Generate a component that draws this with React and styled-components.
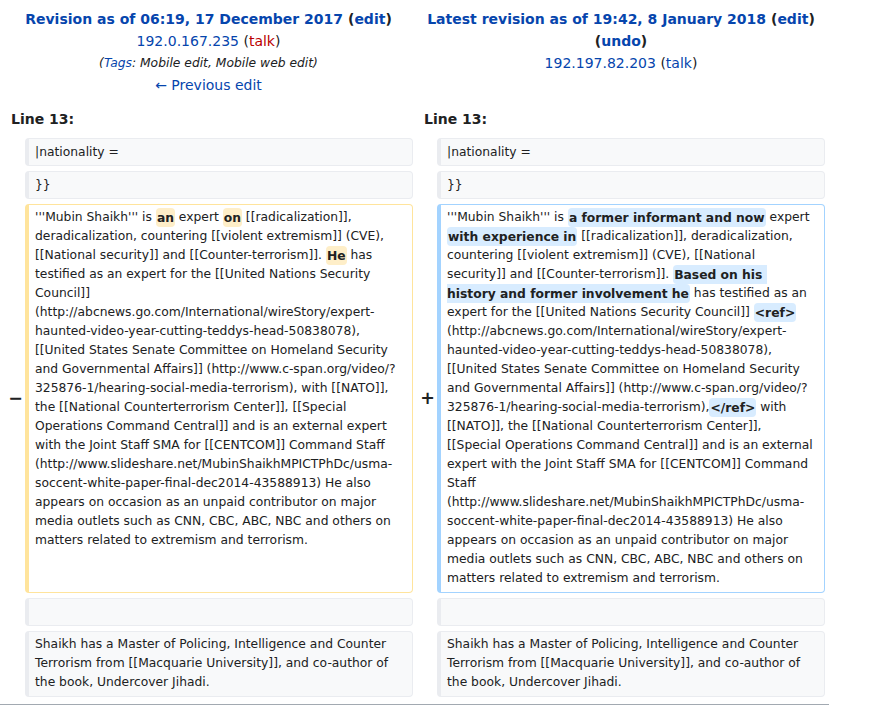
import React from 'react'
import styled, { createGlobalStyle } from 'styled-components'

const GlobalStyle = createGlobalStyle`
  body {
    margin: 0;
    background: #fff;
    color: #202122;
    font-family: "DejaVu Sans", "Noto Sans", sans-serif;
    font-size: 14px;
  }
`

const Page = styled.div`
  width: 874px;
  padding-top: 8px;
`

const HeaderRow = styled.div`
  display: grid;
  grid-template-columns: 413px 412px;
`

const HeaderCell = styled.div`
  text-align: center;
  line-height: 22px;
  padding-left: 4px;
`

const Link = styled.a`
  color: ${p => (p.$red ? '#ba0000' : '#0645ad')};
  text-decoration: none;
  cursor: pointer;
`

const Title = styled.div`
  font-weight: bold;
`

const Tags = styled.div`
  font-style: italic;
  font-size: 12.32px;
`

const LineNoRow = styled.div`
  display: grid;
  grid-template-columns: 413px 412px;
  margin-top: 12px;
`

const LineNo = styled.div`
  font-weight: bold;
  line-height: 22px;
  padding-left: 11px;
`

const DiffGrid = styled.div`
  display: grid;
  grid-template-columns: 25px 388px 24px 388px;
  row-gap: 4.5px;
  margin-top: 8px;
`

const Marker = styled.div`
  display: flex;
  align-items: center;
  justify-content: flex-end;
  padding-right: 2px;
  font-weight: bold;
  font-size: 17.5px;
`

const Cell = styled.div`
  font-size: 12.32px;
  line-height: 19px;
  white-space: pre-wrap;
  overflow-wrap: break-word;
  border-style: solid;
  border-width: 1px 1px 1px 4px;
  border-radius: 4px;
  padding: 3.7px 8.8px 3.7px 6px;
  background: ${p => (p.$kind === 'context' ? '#f8f9fa' : '#fff')};
  border-color: ${p =>
    p.$kind === 'del' ? '#ffe49c' : p.$kind === 'add' ? '#a3d3ff' : '#eaecf0'};
  min-height: 19px;
`

const Change = styled.span`
  font-weight: bold;
  border-radius: 4px;
  padding: 2.5px 1px;
  background: ${p => (p.$kind === 'del' ? '#feeec8' : '#d8ecff')};
`

const Rule = styled.div`
  width: 829px;
  border-top: 1px solid #a2a9b1;
  margin-top: 7px;
`

const ContextRow = ({ text }) => (
  <>
    <Marker />
    <Cell $kind="context">{text}</Cell>
    <Marker />
    <Cell $kind="context">{text}</Cell>
  </>
)

const lastPara =
  'Shaikh has a Master of Policing, Intelligence and Counter Terrorism from [[Macquarie University]], and co-author of the book, Undercover Jihadi.'

export default function App() {
  return (
    <Page>
      <GlobalStyle />
      <HeaderRow>
        <HeaderCell>
          <Title>
            <Link>Revision as of 06:19, 17 December 2017</Link> (<Link>edit</Link>)
          </Title>
          <div>
            <Link>192.0.167.235</Link> (<Link $red>talk</Link>)
          </div>
          <Tags>
            (<Link>Tags</Link>: Mobile edit, Mobile web edit)
          </Tags>
          <div>
            <Link>← Previous edit</Link>
          </div>
        </HeaderCell>
        <HeaderCell>
          <Title>
            <Link>Latest revision as of 19:42, 8 January 2018</Link> (<Link>edit</Link>) (<Link>undo</Link>)
          </Title>
          <div>
            <Link>192.197.82.203</Link> (<Link>talk</Link>)
          </div>
        </HeaderCell>
      </HeaderRow>

      <LineNoRow>
        <LineNo>Line 13:</LineNo>
        <LineNo>Line 13:</LineNo>
      </LineNoRow>

      <DiffGrid>
        <ContextRow text="|nationality =" />
        <ContextRow text="}}" />

        <Marker>−</Marker>
        <Cell $kind="del">
          '''Mubin Shaikh''' is <Change $kind="del">an</Change> expert <Change $kind="del">on</Change> [[radicalization]], deradicalization, countering [[violent extremism]] (CVE), [[National security]] and [[Counter-terrorism]]. <Change $kind="del">He</Change> has testified as an expert for the [[United Nations Security Council]] (http://abcnews.go.com/International/wireStory/expert-haunted-video-year-cutting-teddys-head-50838078), [[United States Senate Committee on Homeland Security and Governmental Affairs]] (http://www.c-span.org/video/?325876-1/hearing-social-media-terrorism), with [[NATO]], the [[National Counterterrorism Center]], [[Special Operations Command Central]] and is an external expert with the Joint Staff SMA for [[CENTCOM]] Command Staff (http://www.slideshare.net/MubinShaikhMPICTPhDc/usma-soccent-white-paper-final-dec2014-43588913) He also appears on occasion as an unpaid contributor on major media outlets such as CNN, CBC, ABC, NBC and others on matters related to extremism and terrorism.
        </Cell>
        <Marker>+</Marker>
        <Cell $kind="add">
          '''Mubin Shaikh''' is <Change $kind="add">a former informant and now</Change> expert <Change $kind="add">with experience in</Change> [[radicalization]], deradicalization, countering [[violent extremism]] (CVE), [[National security]] and [[Counter-terrorism]]. <Change $kind="add">Based on his history and former involvement he</Change> has testified as an expert for the [[United Nations Security Council]] <Change $kind="add">{'<ref>'}</Change>{'\u200B'}(http://abcnews.go.com/International/wireStory/expert-haunted-video-year-cutting-teddys-head-50838078), [[United States Senate Committee on Homeland Security and Governmental Affairs]] (http://www.c-span.org/video/?325876-1/hearing-social-media-terrorism),<Change $kind="add">{'</ref>'}</Change> with [[NATO]], the [[National Counterterrorism Center]], [[Special Operations Command Central]] and is an external expert with the Joint Staff SMA for [[CENTCOM]] Command Staff (http://www.slideshare.net/MubinShaikhMPICTPhDc/usma-soccent-white-paper-final-dec2014-43588913) He also appears on occasion as an unpaid contributor on major media outlets such as CNN, CBC, ABC, NBC and others on matters related to extremism and terrorism.
        </Cell>

        <ContextRow text="" />
        <ContextRow text={lastPara} />
      </DiffGrid>
      <Rule />
    </Page>
  )
}
